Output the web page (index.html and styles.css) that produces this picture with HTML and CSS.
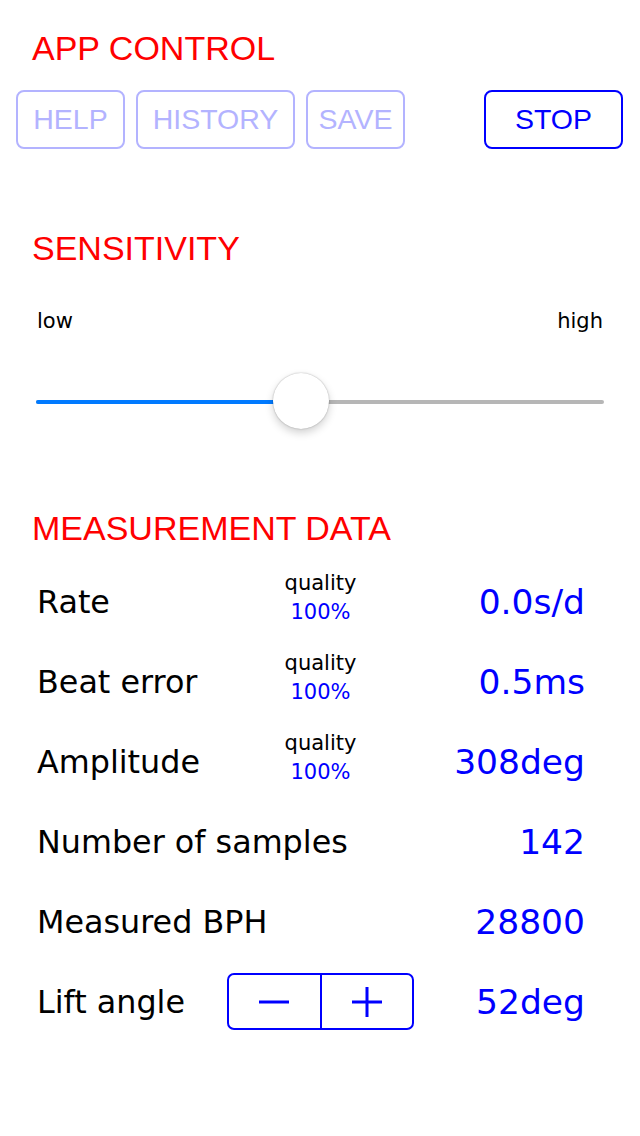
FILE: index.html
```html
<!DOCTYPE html>
<html>
<head>
<meta charset="utf-8">
<link rel="stylesheet" href="styles.css">
</head>
<body>
<div class="screen">
  <h2 class="title title-app">APP CONTROL</h2>
  <div class="btn-row">
    <button class="btn disabled btn-help">HELP</button>
    <button class="btn disabled btn-history">HISTORY</button>
    <button class="btn disabled btn-save">SAVE</button>
    <button class="btn stop">STOP</button>
  </div>

  <h2 class="title title-sens">SENSITIVITY</h2>
  <div class="range-labels"><span>low</span><span>high</span></div>
  <div class="slider">
    <div class="track"><div class="fill" style="width: 46.7%"></div></div>
    <div class="thumb" style="left: 46.7%"></div>
  </div>

  <h2 class="title title-meas">MEASUREMENT DATA</h2>
  <div class="rows">
    <div class="row">
      <div class="label">Rate</div>
      <div class="quality"><div class="q-title">quality</div><div class="q-val">100%</div></div>
      <div class="value">0.0s/d</div>
    </div>
    <div class="row">
      <div class="label">Beat error</div>
      <div class="quality"><div class="q-title">quality</div><div class="q-val">100%</div></div>
      <div class="value">0.5ms</div>
    </div>
    <div class="row">
      <div class="label">Amplitude</div>
      <div class="quality"><div class="q-title">quality</div><div class="q-val">100%</div></div>
      <div class="value">308deg</div>
    </div>
    <div class="row">
      <div class="label wide">Number of samples</div>
      <div class="value">142</div>
    </div>
    <div class="row">
      <div class="label wide">Measured BPH</div>
      <div class="value">28800</div>
    </div>
    <div class="row">
      <div class="label">Lift angle</div>
      <div class="stepper">
        <div class="step minus"><svg width="32" height="32" viewBox="0 0 32 32"><path d="M1 16H31" stroke="#0000ff" stroke-width="3"/></svg></div>
        <div class="step plus"><svg width="32" height="32" viewBox="0 0 32 32"><path d="M1 16H31M16 1V31" stroke="#0000ff" stroke-width="3"/></svg></div>
      </div>
      <div class="value">52deg</div>
    </div>
  </div>
</div>
</body>
</html>
```

FILE: styles.css
```css
html, body {
  margin: 0;
  padding: 0;
  background: #ffffff;
}

.screen {
  width: 640px;
  height: 1136px;
  overflow: hidden;
  display: flex;
  flex-direction: column;
  font-family: "DejaVu Sans", sans-serif;
  color: #000000;
}

.title {
  margin: 0;
  padding-left: 32px;
  font-family: "Liberation Sans", Arial, sans-serif;
  font-weight: normal;
  font-size: 34px;
  line-height: 38px;
  color: #ff0000;
}

.title-app { margin-top: 29px; }
.title-sens { margin-top: 80px; }
.title-meas { margin-top: 80px; }

.btn-row {
  display: flex;
  gap: 11px;
  margin-top: 23px;
  padding: 0 17px 0 16px;
}

.btn {
  height: 59px;
  padding: 0;
  border: 2px solid #0000ff;
  border-radius: 8px;
  background: #ffffff;
  color: #0000ff;
  font-family: "Liberation Sans", Arial, sans-serif;
  font-size: 28.5px;
  line-height: 1;
  text-align: center;
}

.btn.disabled {
  border-color: #b3b3ff;
  color: #b3b3ff;
}

.btn-help { width: 109px; }
.btn-history { width: 159px; }
.btn-save { width: 99px; }

.btn.stop {
  margin-left: auto;
  width: 139px;
}

.range-labels {
  display: flex;
  justify-content: space-between;
  margin-top: 42px;
  padding: 0 37px 0 37px;
  font-size: 21px;
  line-height: 25px;
}

.slider {
  position: relative;
  margin: 39px 36px 0 36px;
  height: 56px;
  display: flex;
  align-items: center;
}

.track {
  flex: 1;
  height: 4px;
  margin-top: 2px;
  border-radius: 2px;
  background: #b6b6b6;
  overflow: hidden;
}

.fill {
  height: 100%;
  background: #007aff;
}

.thumb {
  position: absolute;
  top: 0;
  width: 56px;
  height: 56px;
  margin-left: -28px;
  border-radius: 50%;
  background: #ffffff;
  box-shadow: 0 4px 9px rgba(0, 0, 0, 0.18), 0 0 1.5px rgba(0, 0, 0, 0.35);
}

.rows {
  margin-top: 15px;
  display: flex;
  flex-direction: column;
}

.row {
  display: grid;
  grid-template-columns: 190px 187px 1fr;
  align-items: center;
  height: 80px;
  padding: 0 55px 0 37px;
}

.label {
  font-size: 31.8px;
  line-height: 40px;
  white-space: nowrap;
}

.label.wide {
  grid-column: 1 / span 2;
}

.quality {
  text-align: center;
  font-size: 21px;
  line-height: 29px;
  padding-bottom: 8px;
}

.q-val {
  color: #0000ff;
}

.value {
  grid-column: 3;
  text-align: right;
  font-size: 34.5px;
  line-height: 40px;
  color: #0000ff;
}

.stepper {
  display: flex;
  height: 57px;
  border: 2px solid #0000ff;
  border-radius: 7px;
  box-sizing: border-box;
  margin-top: -1px;
}

.step {
  flex: 1;
  display: flex;
  align-items: center;
  justify-content: center;
}

.step.minus {
  border-right: 2px solid #0000ff;
}
```
